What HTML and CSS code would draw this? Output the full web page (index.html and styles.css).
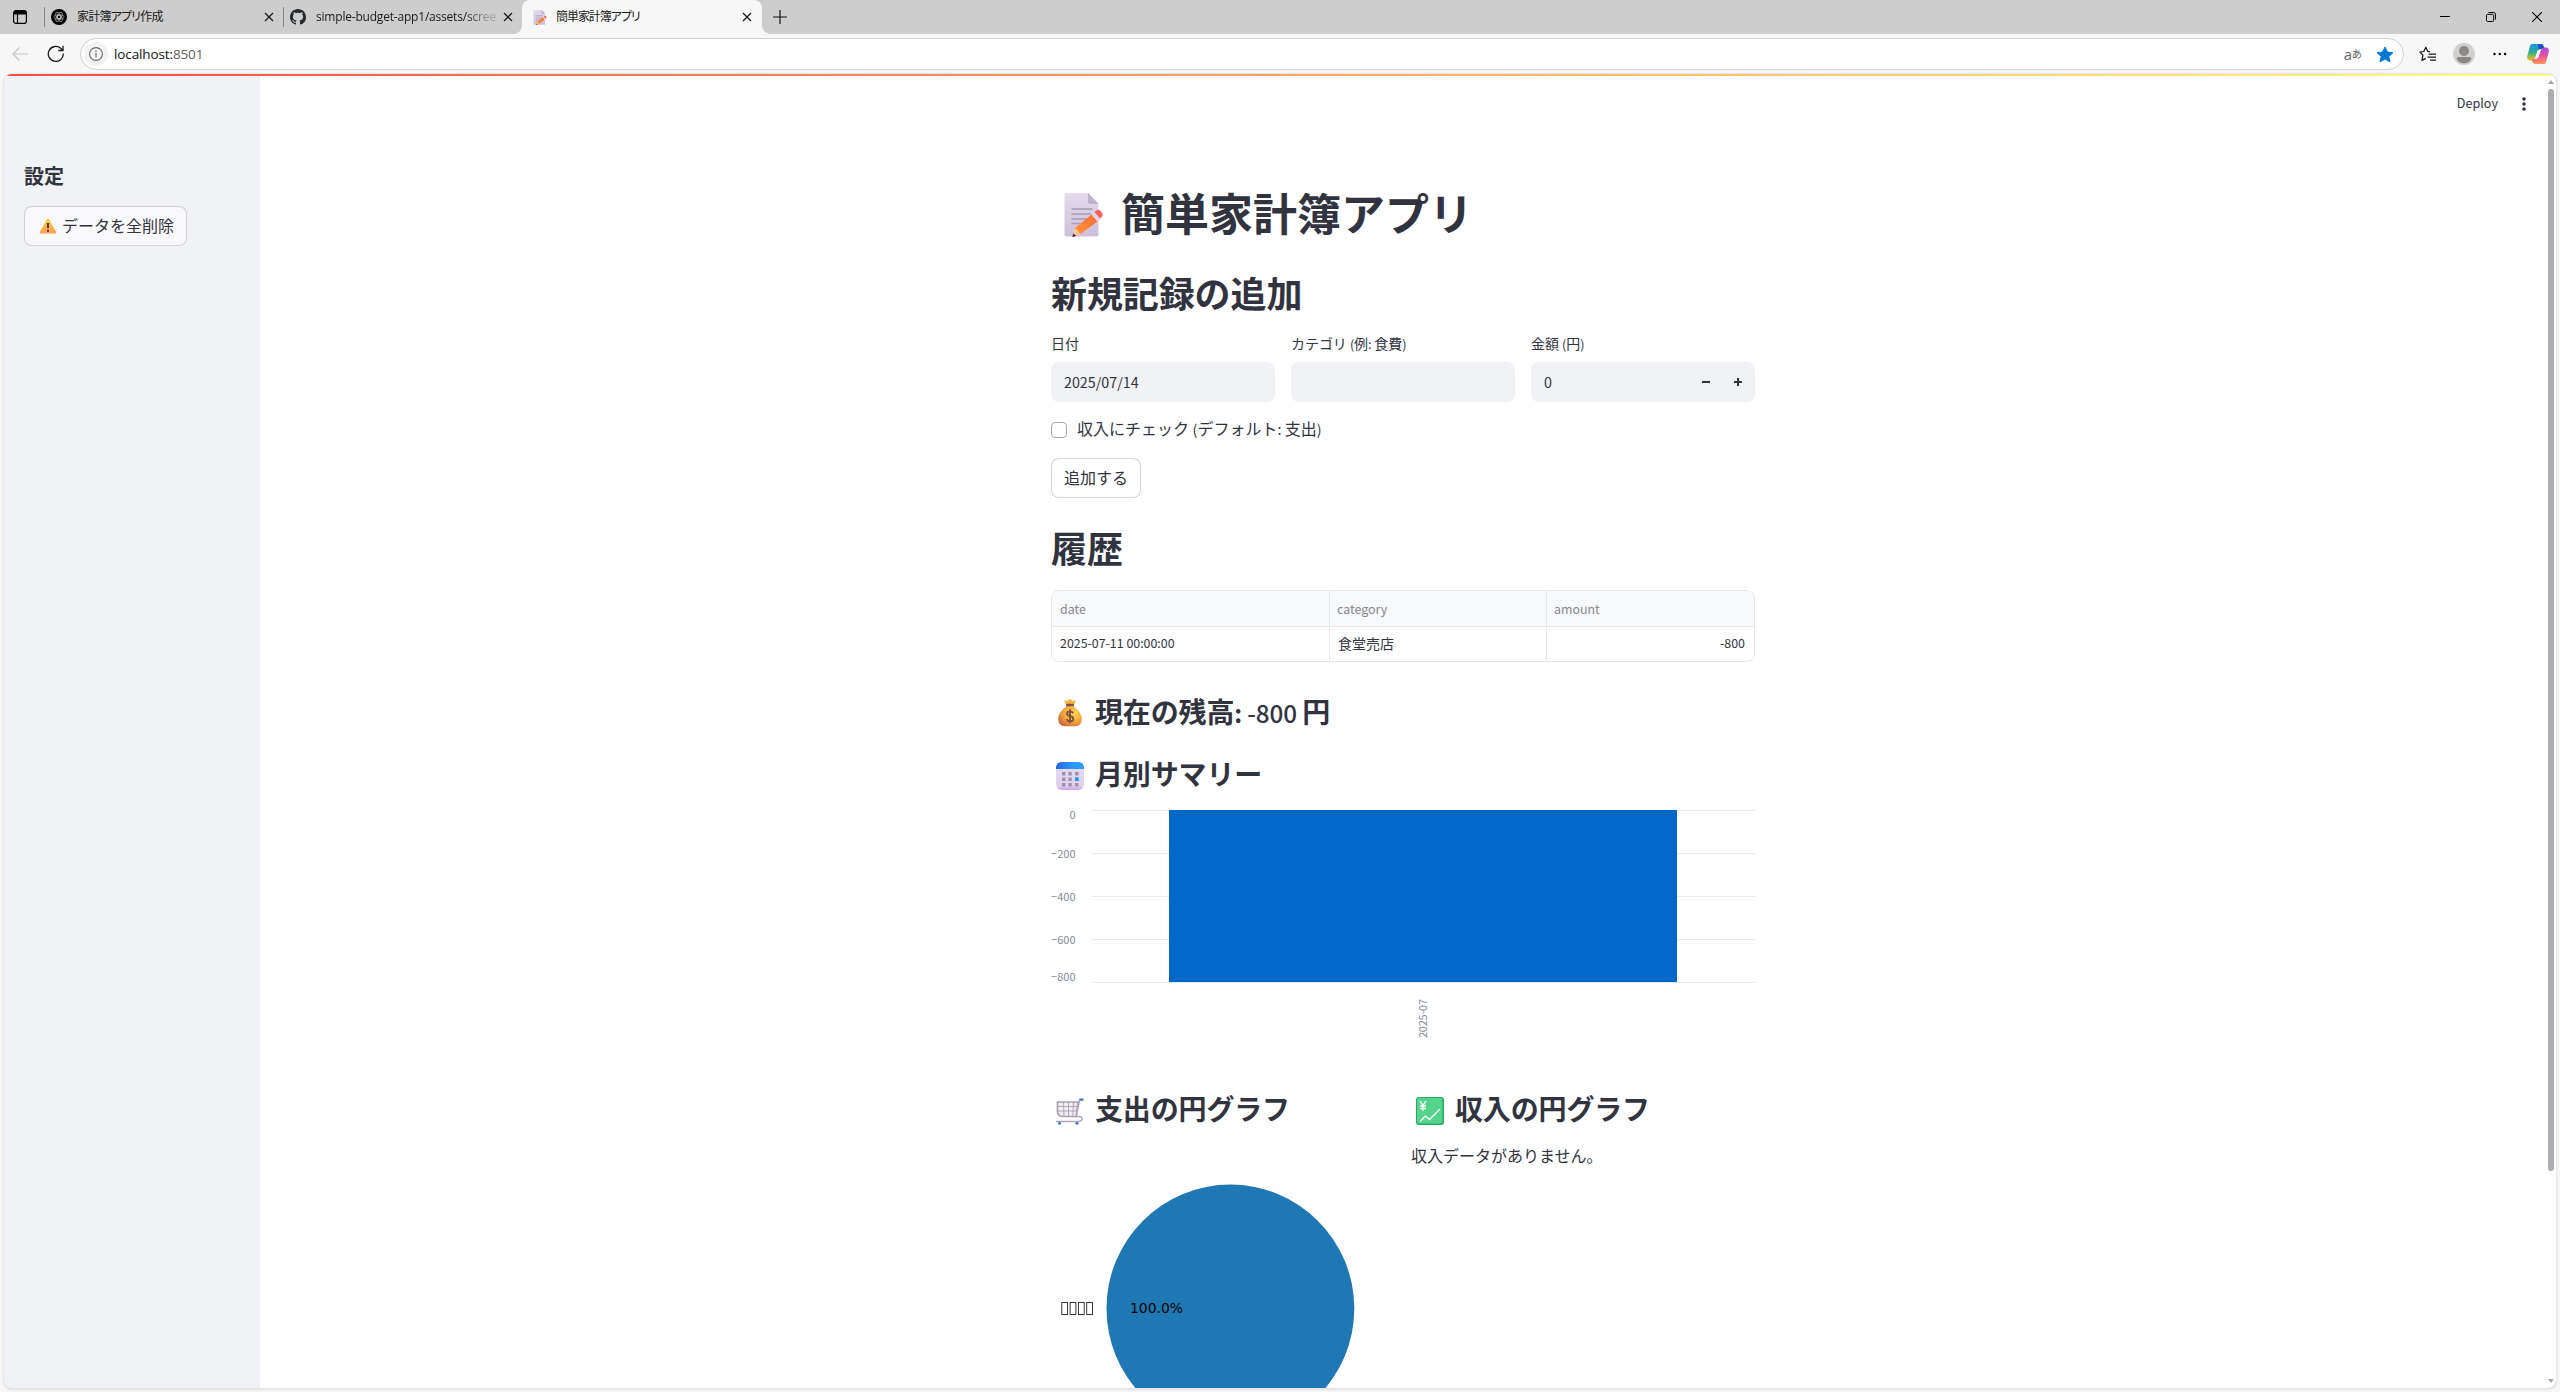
FILE: index.html
```html
<!DOCTYPE html>
<html lang="ja">
<head>
<meta charset="utf-8">
<title>簡単家計簿アプリ</title>
<link rel="stylesheet" href="styles.css">
</head>
<body>
<svg class="defs" width="0" height="0">
  <defs>
    <linearGradient id="paper" x1="0" y1="0" x2="0" y2="1"><stop offset="0" stop-color="#e3dcec"/><stop offset="1" stop-color="#cdbfda"/></linearGradient>
    <linearGradient id="pencil" x1="1" y1="0" x2="0" y2="1"><stop offset="0" stop-color="#ff6a35"/><stop offset="1" stop-color="#ff9a3c"/></linearGradient>
    <radialGradient id="bag" cx=".65" cy=".35" r=".75"><stop offset="0" stop-color="#ffdb55"/><stop offset=".55" stop-color="#f3a83b"/><stop offset="1" stop-color="#c96640"/></radialGradient>
    <linearGradient id="caltop"><stop offset="0" stop-color="#2563e0"/><stop offset=".6" stop-color="#2b9bff"/></linearGradient>
    <linearGradient id="cal" x1="0" y1="0" x2="0" y2="1"><stop offset="0" stop-color="#e6dff0"/><stop offset=".85" stop-color="#dfd0ec"/><stop offset="1" stop-color="#cda2ea"/></linearGradient>
    <linearGradient id="warn" x1="0" y1="0" x2="0" y2="1"><stop offset="0" stop-color="#ffce4a"/><stop offset="1" stop-color="#ffa054"/></linearGradient>
    <linearGradient id="cpl" x1="0" y1="0" x2="0" y2="1"><stop offset="0" stop-color="#1997e8"/><stop offset=".5" stop-color="#2fae8f"/><stop offset="1" stop-color="#f2c319"/></linearGradient>
    <linearGradient id="cpr" x1="0" y1="0" x2="0" y2="1"><stop offset="0" stop-color="#a44be8"/><stop offset=".5" stop-color="#e94f9d"/><stop offset="1" stop-color="#ff9655"/></linearGradient>
    <symbol id="memo" viewBox="0 0 38 44">
      <path d="M1.500 0H24l10 10.500V41.500q0 2-2 2H2q-2 0-2-2V2Q0 0 1.500 0z" fill="url(#paper)"/>
      <path d="M23.500 0L34 11H25.500q-2 0-2-2z" fill="#bdb0ca"/>
      <path d="M7 16h21M7 21h19M7 26h15M7 30.500h11" stroke="#a79bb1" stroke-width="1.600"/>
      <path d="M8 43.500L10.500 35 27 21.500l6 7L16 41z" fill="url(#pencil)"/>
      <path d="M27 21.500l3-2.500 6 7-3 2.500z" fill="#e2d3ea"/>
      <path d="M30 19l2-1.500q2-1.500 4 .5l1.500 2q1.500 2-.5 4l-1.500 1.500z" fill="#fb5f57"/>
      <path d="M10.500 35L16 41 8 43.500z" fill="#ffc98b"/><path d="M8.800 40.500l3 2.500-4 1z" fill="#3b2344"/>
    </symbol>
    <symbol id="x" viewBox="0 0 10 10"><path d="M1 1l8 8M9 1L1 9" stroke="#1a1a1a" stroke-width="1.300" fill="none"/></symbol>
  </defs>
</svg>

<header class="tabs">
  <svg class="workspaces" width="16" height="16" viewBox="0 0 16 16"><rect x="1.600" y="1.600" width="12.800" height="12.800" rx="2.500" fill="none" stroke="#000" stroke-width="1.200"/><path d="M1.500 5.500V4Q1.500 1.500 4 1.500h8q2.500 0 2.500 2.500v1.500z"/><path d="M5.500 5v9.500" stroke="#000" stroke-width="1.200"/></svg>
  <div class="tab tab-a">
    <svg width="16" height="16" viewBox="0 0 16 16"><circle cx="8" cy="8" r="8"/><g fill="none" stroke="#c4c4c4" stroke-width=".6"><ellipse cx="8" cy="6.500" rx="2.200" ry="3.600" transform="rotate(30 8 8)"/><ellipse cx="8" cy="6.500" rx="2.200" ry="3.600" transform="rotate(90 8 8)"/><ellipse cx="8" cy="6.500" rx="2.200" ry="3.600" transform="rotate(150 8 8)"/><ellipse cx="8" cy="6.500" rx="2.200" ry="3.600" transform="rotate(210 8 8)"/><ellipse cx="8" cy="6.500" rx="2.200" ry="3.600" transform="rotate(270 8 8)"/><ellipse cx="8" cy="6.500" rx="2.200" ry="3.600" transform="rotate(330 8 8)"/></g></svg>
    <span class="tab-title jp">家計簿アプリ作成</span>
    <svg class="close" width="10" height="10"><use href="#x"/></svg>
  </div>
  <div class="tab tab-b">
    <svg width="16" height="16" viewBox="0 0 16 16"><path fill="#24292f" d="M8 0C3.580 0 0 3.580 0 8c0 3.540 2.290 6.530 5.470 7.590.4.070.55-.17.55-.38 0-.19-.01-.82-.01-1.490-2.010.37-2.530-.49-2.690-.94-.09-.23-.48-.94-.82-1.130-.28-.15-.68-.52-.01-.53.63-.01 1.080.58 1.230.82.72 1.210 1.870.87 2.330.66.07-.52.28-.87.51-1.070-1.780-.2-3.640-.89-3.640-3.950 0-.87.31-1.590.82-2.150-.08-.2-.36-1.020.08-2.120 0 0 .67-.21 2.200.82.64-.18 1.320-.27 2-.27s1.360.09 2 .27c1.530-1.040 2.200-.82 2.200-.82.44 1.100.16 1.920.08 2.120.51.56.82 1.270.82 2.150 0 3.070-1.870 3.750-3.650 3.950.29.25.54.73.54 1.480 0 1.070-.01 1.930-.01 2.200 0 .21.15.46.55.38A8.010 8.010 0 0 0 16 8c0-4.420-3.580-8-8-8z"/></svg>
    <span class="tab-title fade">simple-budget-app1/assets/scree</span>
    <svg class="close" width="10" height="10"><use href="#x"/></svg>
  </div>
  <div class="tab tab-c">
    <svg width="14" height="15"><use href="#memo"/></svg>
    <span class="tab-title jp">簡単家計簿アプリ</span>
    <svg class="close" width="10" height="10"><use href="#x"/></svg>
  </div>
  <svg class="newtab" width="14" height="14" viewBox="0 0 14 14"><path d="M7 0v14M0 7h14" stroke="#111" stroke-width="1.200"/></svg>
  <div class="winctl">
    <svg width="10" height="10" viewBox="0 0 10 10"><path d="M0 4.500h10" stroke="#000"/></svg>
    <svg width="10" height="10" viewBox="0 0 10 10" fill="none" stroke="#000"><rect x=".5" y="2.300" width="7.200" height="7.200" rx="1.200"/><path d="M2.500.5H7.500q2 0 2 2V7.500"/></svg>
    <svg width="10" height="10" viewBox="0 0 10 10"><path d="M0 0l10 10M10 0L0 10" stroke="#000" stroke-width="1.100"/></svg>
  </div>
</header>

<div class="toolbar">
  <svg class="back" width="16" height="14" viewBox="0 0 16 14"><path d="M16 7H1M7.500.5L1 7l6.500 6.500" fill="none" stroke="#c6c6c6" stroke-width="1.200"/></svg>
  <svg class="reload" width="18" height="18" viewBox="0 0 18 18"><path d="M16.300 8.500A7.500 7.500 0 1 1 14 3.500l1.500 1.700M16 .8v4.700h-4.700" fill="none" stroke="#1a1a1a" stroke-width="1.300"/></svg>
  <div class="address">
    <span class="info"><svg width="14" height="14" viewBox="0 0 14 14"><circle cx="7" cy="7" r="6.400" fill="none" stroke="#6b6b6b" stroke-width="1.100"/><path d="M7 6v4.200M7 3.600v1.300" stroke="#6b6b6b" stroke-width="1.200"/></svg></span>
    <span class="url">localhost:<span class="port">8501</span></span>
    <span class="translate"><span>a</span><span class="kana">あ</span></span>
    <svg class="star" width="18" height="17" viewBox="0 0 18 17"><path d="M9 1l2.400 5 5.500.7-4.100 3.700 1.200 5.400L9 13l-5 2.800 1.200-5.400L1.100 6.700 6.600 6z" fill="#0078d4" stroke="#0078d4" stroke-width="1" stroke-linejoin="round"/></svg>
  </div>
  <svg class="favs" width="17" height="17" viewBox="0 0 17 17"><path d="M11 5.700L8.800 5.500 6.800 1.300 4.800 5.500.9 6l3 3.100-.9 5.300 3.800-2M9.500 8H17M8.500 11H17M11 14h6" fill="none" stroke="#1a1a1a" stroke-width="1.250" stroke-linejoin="round"/></svg>
  <svg class="avatar" width="22" height="22" viewBox="0 0 22 22"><circle cx="11" cy="11" r="11" fill="#d2d0ce"/><circle cx="11" cy="8" r="5" fill="#8a8886"/><path d="M3.500 16q0-2 2-2h11q2 0 2 2A9.500 9.500 0 0 1 11 20.500 9.500 9.500 0 0 1 3.500 16z" fill="#8a8886"/></svg>
  <svg class="dots" width="14" height="4" viewBox="0 0 14 4"><circle cx="1.500" cy="2" r="1.200"/><circle cx="6.800" cy="2" r="1.200"/><circle cx="12.100" cy="2" r="1.200"/></svg>
  <svg class="copilot" width="22" height="20" viewBox="0 0 22 20"><path d="M5 0h9q2 0 2.500 2l1 3h-4q-2 0-2.700 2L8 14q-.8 2.500-3 2.500H2.500Q-.5 16 .3 12L3 2q.5-2 2-2z" fill="url(#cpl)"/><path d="M11 0h3q2 0 2.500 2l1 3h-4q-1.300 0-2 1z" fill="#1f4fc4"/><path d="M17 20H8q-2 0-2.500-2l-1-3h4q2 0 2.700-2L14 6q.8-2.500 3-2.500h2.500q3 .5 2.200 4.500L19 18q-.5 2-2 2z" fill="url(#cpr)"/><path d="M10.500 6.500h3L11.500 13.500h-3z" fill="#fff"/></svg>
</div>

<div class="frame">
  <div class="decoration"></div>
  <aside class="sidebar">
    <h2 class="side-title">設定</h2>
    <button class="btn side-btn"><svg width="18" height="16" viewBox="0 0 18 16"><path d="M9 .5q.8 0 1.300 1L17.200 14q.6 1.500-1 1.500H1.800Q.2 15.500.8 14L7.700 1.500Q8.200.5 9 .5z" fill="url(#warn)"/><path d="M9 5v5.200M9 11.800v1.900" stroke="#4b3049" stroke-width="1.900"/></svg>データを全削除</button>
  </aside>
  <main class="main">
    <div class="topbar"><span>Deploy</span><svg width="4" height="14" viewBox="0 0 4 14" fill="#31333f"><circle cx="2" cy="2" r="1.800"/><circle cx="2" cy="7" r="1.800"/><circle cx="2" cy="12" r="1.800"/></svg></div>
    <div class="column">
      <h1><svg width="39" height="44"><use href="#memo"/></svg>簡単家計簿アプリ</h1>
      <h2 class="new-head">新規記録の追加</h2>
      <div class="fields">
        <div><label>日付</label><div class="input"><span class="lat">2025/07/14</span></div></div>
        <div><label>カテゴリ&nbsp;<span class="lat">(</span>例<span class="lat">:&nbsp;</span>食費<span class="lat">)</span></label><div class="input"></div></div>
        <div><label>金額&nbsp;<span class="lat">(</span>円<span class="lat">)</span></label><div class="input number"><span class="lat">0</span><svg width="8" height="8" viewBox="0 0 8 8"><path d="M0 4h8" stroke="#31333f" stroke-width="2"/></svg><svg width="8" height="8" viewBox="0 0 8 8"><path d="M0 4h8M4 0v8" stroke="#31333f" stroke-width="2"/></svg></div></div>
      </div>
      <div class="check"><span class="box"></span><span>収入にチェック <span class="lat">(</span>デフォルト<span class="lat">: </span>支出<span class="lat">)</span></span></div>
      <button class="btn add-btn">追加する</button>
      <h2 class="hist-head">履歴</h2>
      <div class="table">
        <div class="th">date</div><div class="th">category</div><div class="th">amount</div>
        <div class="td">2025-07-11 00:00:00</div><div class="td jpcell">食堂売店</div><div class="td num">-800</div>
      </div>
      <h3 class="balance"><svg width="28" height="30" viewBox="0 0 28 30"><path d="M9.800 6.500L8 2.300l3.300.7L14 .8l2.700 2.200 3.300-.7-1.800 4.200z" fill="#f8b53f"/><rect x="10" y="5.700" width="8" height="3" rx="1" fill="#8b4f43"/><path d="M10.500 8.500h7Q25.800 14 25.800 21q0 7.300-7 7.300H9.200q-7 0-7-7.300 0-7 8.300-12.500z" fill="url(#bag)"/><path d="M17.300 15.300q-1-1.800-3.400-1.800-2.900 0-2.900 2.200 0 1.700 3 2.300 3.300.7 3.300 2.900 0 2.300-3.300 2.300-2.600 0-3.500-2.100M14 11.300v14" fill="none" stroke="#875040" stroke-width="1.900"/></svg>現在の残高<span class="lat">:&nbsp;<b>-800</b>&nbsp;</span>円</h3>
      <h3 class="monthly"><svg width="28" height="28" viewBox="0 0 28 28"><rect width="28" height="28" rx="6" fill="url(#cal)"/><path d="M0 7V6Q0 0 6 0h16q6 0 6 6v1z" fill="url(#caltop)"/><g fill="#a092b0"><path d="M6 10h3.500v3.500H6zM12.300 10h3.500v3.500h-3.500zM19 10h3.500v3.500H19zM6 15.500h3.500V19H6zM12.300 15.500h3.500V19h-3.500zM6 21h3.500v3.500H6zM12.300 21h3.500v3.500h-3.500zM19 21h3.500v3.500H19z"/></g><path d="M19 15.300h3.700V19H19z" fill="#1d93f5"/></svg>月別サマリー</h3>
      <svg class="chart" width="704" height="250" viewBox="0 0 704 250">
        <path d="M40 9.500h664M40 52.500h664M40 95.500h664M40 138.500h664M40 181.500h664" stroke="#e6eaf1"/>
        <rect x="118" y="9" width="508" height="172" fill="#0068c9"/>
        <g class="axis" text-anchor="end"><text x="24.500" y="18">0</text><text x="24.500" y="57">−200</text><text x="24.500" y="100">−400</text><text x="24.500" y="143">−600</text><text x="24.500" y="180">−800</text><text transform="translate(376 198) rotate(-90)" textLength="39">2025-07</text></g>
      </svg>
      <div class="pies">
        <section>
          <h3><svg width="28" height="28" viewBox="0 0 28 28"><g fill="none" stroke="#a8a1ad"><path d="M1.500 5h20.500l-1.700 14.500H6Q2 19 1.500 15z" stroke-width="1.700" fill="#f0edf4"/><path d="M7.500 5l.5 14M12.500 5v14M17.500 5l-.7 14M2 9.500h19M2 14h18.500" stroke-width=".9"/><path d="M26 2.500l-2.500.5L20 19.500q6-.5 6 2.300t-4 2.700H0" stroke="#b6a4bb" stroke-width="1.600"/></g><path d="M23.500 1.500h4v2.200h-4z" fill="#3979d7"/><circle cx="3.500" cy="26.300" r="1.500" fill="#3979d7"/><circle cx="21" cy="26.300" r="1.500" fill="#3979d7"/></svg>支出の円グラフ</h3>
          <svg class="pie" width="344" height="330" viewBox="0 0 344 330">
            <circle cx="179.400" cy="164.500" r="123.900" fill="#1f77b4"/>
            <g fill="none" stroke="#222" stroke-width=".9"><rect x="10.800" y="158.500" width="5.800" height="12"/><rect x="19.100" y="158.500" width="5.800" height="12"/><rect x="27.400" y="158.500" width="5.800" height="12"/><rect x="35.700" y="158.500" width="5.800" height="12"/></g>
            <text class="pct" x="79" y="168.500" textLength="53" lengthAdjust="spacingAndGlyphs">100.0%</text>
          </svg>
        </section>
        <section>
          <h3><svg width="28" height="28" viewBox="0 0 28 28"><rect width="28" height="28" rx="3" fill="#28a766"/><rect x="1" y="1" width="25.500" height="25.500" rx="2" fill="#57d48b"/><path d="M4 4l3 4.500L10 4M7 8.500V14M4 9h6M4 11.500h6M4 24.500l5.500-5.500 4 3.500L24 12" fill="none" stroke="#fff" stroke-width="1.300"/></svg>収入の円グラフ</h3>
          <p>収入データがありません。</p>
        </section>
      </div>
    </div>
  </main>
  <div class="scroll">
    <svg width="6" height="4" viewBox="0 0 6 4"><path d="M3 0l3 4H0z" fill="#a6a6aa"/></svg>
    <div class="thumb"></div>
    <svg width="6" height="4" viewBox="0 0 6 4"><path d="M3 4l3-4H0z" fill="#a6a6aa"/></svg>
  </div>
</div>
</body>
</html>
```

FILE: styles.css
```css
* { box-sizing: border-box; }
body {
  margin: 0;
  width: 2560px;
  height: 1392px;
  overflow: hidden;
  display: flex;
  flex-direction: column;
  background: #f7f7f7;
  color: #31333f;
  font-family: "Noto Sans CJK JP", sans-serif;
}
svg { flex: none; display: block; }
.defs { position: absolute; }
h1, h2, h3, p { margin: 0; }

/* browser tabs */
.tabs {
  height: 34px;
  flex: none;
  display: flex;
  align-items: center;
  background: #cdcdcd;
  color: #1a1a1a;
}
.workspaces { margin-left: 12px; margin-right: 16px; }
.tab { display: flex; align-items: center; height: 20px; }
.tab-a { width: 239px; border-left: 1px solid #858585; padding: 0 9px 0 6px; }
.tab-b { width: 239px; border-left: 1px solid #858585; padding: 0 9px 0 6px; }
.tab-c {
  position: relative;
  width: 240px;
  height: 34px;
  padding: 0 10px 0 11px;
  background: #f7f7f7;
  border-radius: 8px 8px 0 0;
}
.tab-c::before, .tab-c::after {
  content: "";
  position: absolute;
  bottom: 0;
  width: 8px;
  height: 8px;
}
.tab-c::before { left: -8px; background: radial-gradient(circle at 0 0, transparent 7.500px, #f7f7f7 8px); }
.tab-c::after { right: -8px; background: radial-gradient(circle at 100% 0, transparent 7.500px, #f7f7f7 8px); }
.tab-title {
  flex: 1;
  margin-left: 10px;
  font: 12px/16px "Open Sans", "Noto Sans CJK JP", sans-serif;
  letter-spacing: -.2px;
  white-space: nowrap;
}
.tab-title.jp { font: 12px/16px "Noto Sans CJK JP", sans-serif; font-feature-settings: "palt"; padding-bottom: 2px; }
.tab-a .tab-title { margin-left: 10px; letter-spacing: -.8px; }
.tab-c .tab-title { margin-left: 9px; letter-spacing: -1.050px; }
.fade { -webkit-mask-image: linear-gradient(90deg, #000 80%, rgba(0,0,0,.25) 92%); mask-image: linear-gradient(90deg, #000 80%, rgba(0,0,0,.25) 92%); }
.newtab { margin-left: 11px; }
.winctl { margin-left: auto; margin-right: 18px; display: flex; gap: 36px; }

/* toolbar */
.toolbar { height: 40px; flex: none; display: flex; align-items: center; }
.back { margin-left: 12px; }
.reload { margin-left: 19px; }
.address {
  width: 2324px;
  height: 32px;
  margin-left: 15px;
  display: flex;
  align-items: center;
  padding: 0 9px 0 3px;
  background: #fff;
  border: 1px solid #cfcfd2;
  border-radius: 16px;
}
.info { width: 24px; height: 24px; border-radius: 50%; background: #f3f3f3; display: grid; place-items: center; }
.url { flex: 1; margin-left: 6px; font: 13.500px/18px "Open Sans", sans-serif; letter-spacing: -.12px; color: #111; }
.port { color: #606060; }
.translate { display: flex; align-items: center; height: 16px; margin-right: 14px; font: 15px/16px "Open Sans", sans-serif; color: #666; }
.kana { font: 10.500px/16px "Noto Sans CJK JP", sans-serif; margin-left: -.5px; }
.favs { margin-left: 15px; }
.avatar { margin-left: 17px; }
.dots { margin-left: 18px; }
.copilot { margin-left: 20px; }

/* page */
.frame {
  position: relative;
  width: 2552px;
  height: 1314px;
  margin-left: 4px;
  flex: none;
  display: flex;
  overflow: hidden;
  background: #fff;
  border-radius: 8px;
  outline: 1px solid #e6e6e7;
  box-shadow: 0 1px 3px #c8c8c8;
}
.decoration {
  position: absolute;
  inset: 0 0 auto;
  height: 2px;
  background: linear-gradient(90deg, #ff4b4b, #fffd80);
}
.sidebar { width: 256px; background: #f0f2f6; padding: 87px 20px 0; }
.side-title { font-size: 20px; line-height: 30px; font-weight: 600; height: 30px; }
.btn {
  display: flex;
  align-items: center;
  height: 40px;
  padding: 0 12px 2px;
  background: #fff;
  border: 1px solid rgba(49, 51, 63, .2);
  border-radius: 8px;
  color: #31333f;
  font: 16px/24px "Noto Sans CJK JP", sans-serif;
  white-space: nowrap;
}
.side-btn { margin-top: 15px; width: 163px; background: #f9f9fb; padding: 0 12px 3px 14px; gap: 5px; }
.side-btn svg { margin-top: 3px; }
.main { width: 2286px; position: relative; }
.topbar {
  position: absolute;
  top: 19px;
  right: 20px;
  height: 20px;
  display: flex;
  align-items: center;
  gap: 24px;
  font-size: 12.600px;
  line-height: 18px;
}
.topbar svg { margin-top: 2px; }
.column { width: 704px; margin: 0 auto; }
.lat { font-size: .9em; }
h1, h2, h3 { display: flex; align-items: center; white-space: nowrap; font-weight: 700; }
h1 { height: 53px; margin-top: 114px; padding: 0 0 5px 13px; font-size: 44px; line-height: 48px; }
h1 svg { margin: 5px 18px 0 0; }
.new-head, .hist-head { font-size: 36px; line-height: 45px; padding-bottom: 4px; letter-spacing: -.1px; }
.new-head { height: 49px; margin-top: 29px; }
.hist-head { height: 48px; margin-top: 28px; padding-bottom: 5px; }
.fields { display: grid; grid-template-columns: repeat(3, 224px); gap: 16px; margin-top: 15px; }
label { display: block; height: 20px; margin-bottom: 8px; font-size: 14px; line-height: 18px; letter-spacing: -.05px; }
.input {
  height: 40px;
  display: flex;
  align-items: center;
  padding: 0 13px;
  background: #f0f2f6;
  border-radius: 8px;
  font-size: 15.900px;
}
.input .lat { margin-bottom: 2px; }
.number svg:nth-of-type(1) { margin-left: auto; margin-right: 24px; }
.check { display: flex; align-items: center; gap: 10px; height: 24px; margin-top: 16px; font-size: 16px; line-height: 20px; }
.check > span:last-child { padding-bottom: 3px; }
.check > .box { width: 16px; height: 16px; border: 1px solid #a3a8b4; border-radius: 4px; background: #fff; }
.add-btn { width: 90px; margin-top: 16px; }
.table {
  display: grid;
  grid-template-columns: 278px 217px 207px;
  grid-template-rows: 36px 34px;
  height: 72px;
  margin-top: 16px;
  border: 1px solid #e6e7ea;
  border-radius: 8px;
  overflow: hidden;
  font-size: 12.400px;
}
.th, .td { display: flex; align-items: center; padding: 0 8px 1px; border-right: 1px solid #e6e7ea; }
.th { background: #f8f9fb; color: #84868f; border-bottom: 1px solid #e6e7ea; padding: 0 7px; }
.th:first-child { padding-left: 8px; }
.td { padding-bottom: 2px; }
.th:nth-child(3n), .td:nth-child(3n) { border-right: 0; }
.jpcell { font-size: 14px; padding-left: 8px; }
.num { justify-content: flex-end; padding-right: 9px; }
h3 { height: 36px; padding: 0 0 3px 5px; font-size: 28px; line-height: 33px; letter-spacing: -.15px; }
h3 svg { margin: 4px 11px 0 0; }
h3 b { font-weight: 500; }
.balance { height: 37px; margin-top: 32px; }
.balance .lat { font-size: .865em; padding-top: 2px; }
.monthly { margin-top: 26px; }
.chart { margin-top: 8px; }
.axis { font-size: 11px; fill: #858896; }
.pies { display: grid; grid-template-columns: 344px 344px; gap: 16px; margin-top: 41px; }
.pie { margin-top: 16px; }
.pct { font: 14px "DejaVu Sans", sans-serif; fill: #000; }
p { margin-top: 15px; font-size: 16px; line-height: 24px; }
.scroll { width: 6px; margin-left: 2px; display: flex; flex-direction: column; align-items: center; padding: 6px 0 5px; }
.thumb { width: 6px; height: 1082px; margin-top: 5px; margin-bottom: auto; border-radius: 3px; background: #acacb0; }
```
